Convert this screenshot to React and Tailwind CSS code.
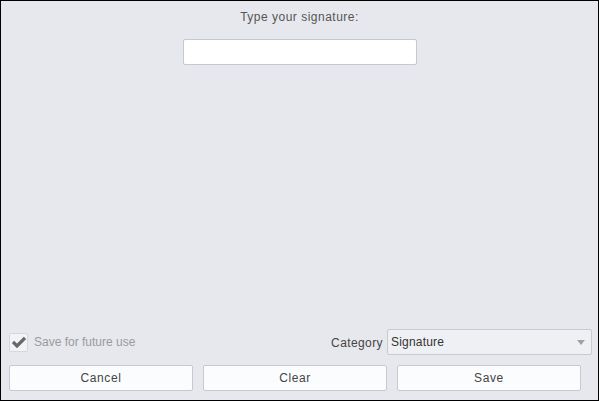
import React from "react";

const font = { fontFamily: "'Liberation Sans', Arial, sans-serif" };

const CheckIcon = () => (
    <svg width="14" height="12" viewBox="0 0 14 12">
        <path d="M1 6 L5 10 L13 2" fill="none" stroke="#686868" strokeWidth="3.2" strokeLinejoin="miter" />
    </svg>
);

const App = () => {
    return (
        <div
            className="w-[599px] h-[401px] border border-black bg-[#e7e8ed] flex flex-col pt-[8px] pb-[9px] text-[12px] tracking-[0.4px]"
            style={font}
        >
            {/* Header */}
            <div className="text-center leading-[16px] text-[#555] tracking-[0.5px]">Type your signature:</div>
            <input
                type="text"
                className="mt-[14px] mx-auto w-[234px] h-[26px] bg-white border border-[#c6c7cf] rounded-[2px] outline-none px-1"
            />

            <div className="flex-1" />

            {/* Options row */}
            <div className="flex items-center justify-between pl-[8px] pr-[6px] h-[26px]">
                <div className="flex items-center gap-[6px]">
                    <div className="w-[19px] h-[19px] bg-[#f2f3f6] border border-[#d6d7dc] rounded-[2px] flex items-center justify-center">
                        <CheckIcon />
                    </div>
                    <span className="text-[#9a9a9e] tracking-normal">Save for future use</span>
                </div>
                <div className="flex items-center gap-[4px]">
                    <span className="text-[#444] mt-[2px]">Category</span>
                    <div className="w-[205px] h-[26px] bg-[#eff0f4] border border-[#c9cad0] rounded-[2px] flex items-center justify-between pl-[3px] pr-[6px] text-[#333] tracking-[0.2px]">
                        <span>Signature</span>
                        <svg width="8" height="5" viewBox="0 0 8 5">
                            <path d="M0 0 H8 L4 5 Z" fill="#a0a0a5" />
                        </svg>
                    </div>
                </div>
            </div>

            {/* Buttons */}
            <div className="flex gap-[10px] pl-[8px] mt-[10px]">
                {["Cancel", "Clear", "Save"].map((label) => (
                    <button
                        key={label}
                        className="w-[184px] h-[26px] bg-[#fbfcfe] border border-[#c8c9cf] rounded-[2px] text-[#444] text-[12px] tracking-[0.6px]"
                    >
                        {label}
                    </button>
                ))}
            </div>
        </div>
    );
};

export default App;
